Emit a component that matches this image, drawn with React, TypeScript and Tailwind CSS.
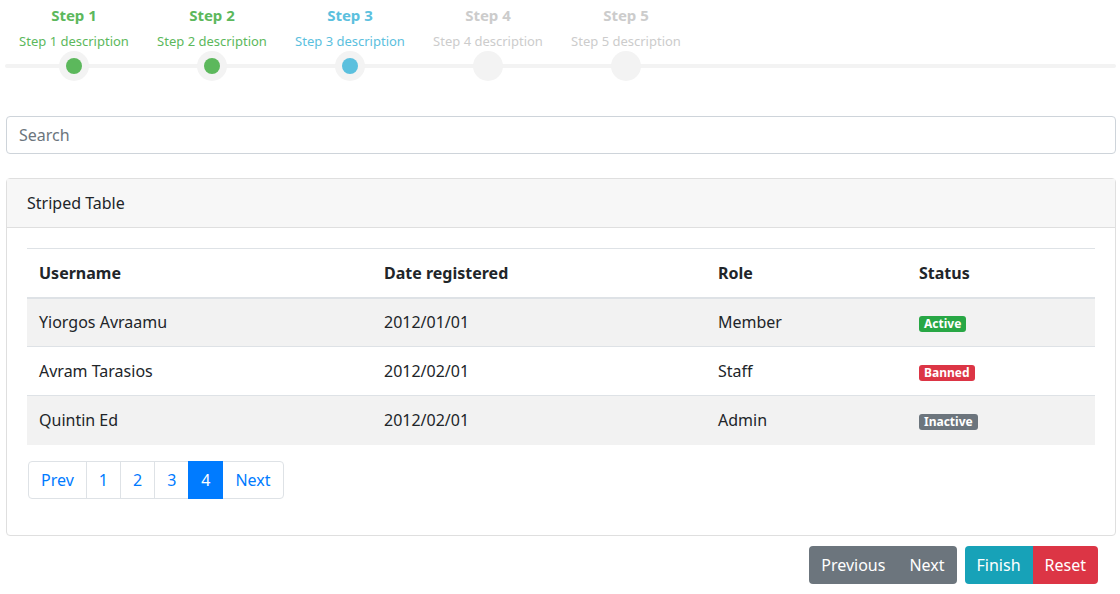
import React, { useState } from "react";

type Step = { title: string; desc: string; state: "done" | "active" | "todo" };

const steps: Step[] = [
  { title: "Step 1", desc: "Step 1 description", state: "done" },
  { title: "Step 2", desc: "Step 2 description", state: "done" },
  { title: "Step 3", desc: "Step 3 description", state: "active" },
  { title: "Step 4", desc: "Step 4 description", state: "todo" },
  { title: "Step 5", desc: "Step 5 description", state: "todo" },
];

const users = [
  { name: "Yiorgos Avraamu", date: "2012/01/01", role: "Member", status: "Active" },
  { name: "Avram Tarasios", date: "2012/02/01", role: "Staff", status: "Banned" },
  { name: "Quintin Ed", date: "2012/02/01", role: "Admin", status: "Inactive" },
];

const badgeColor: Record<string, string> = {
  Active: "bg-[#28a745]",
  Banned: "bg-[#dc3545]",
  Inactive: "bg-[#6c757d]",
};

const textColor = {
  done: "text-[#5cb85c]",
  active: "text-[#5bc0de]",
  todo: "text-[#cccccc]",
};

const dotColor = {
  done: "bg-[#5cb85c]",
  active: "bg-[#5bc0de]",
  todo: "bg-transparent",
};

const App = (): React.JSX.Element => {
  const [search, setSearch] = useState<string>("");
  const [page, setPage] = useState<number>(4);

  return (
    <div className="w-[1120px] h-[594px] bg-white pl-[6px] pr-[4px] font-['Segoe_UI','Noto_Sans',sans-serif] text-[#212529] overflow-hidden">
      {/* stepper */}
      <div className="relative -ml-px">
        <div className="absolute left-0 right-0 top-[64px] h-[4px] rounded-full bg-[#f3f3f3]" />
        <div className="relative flex">
          {steps.map((s) => (
            <div key={s.title} className="w-[138px] flex flex-col items-center">
              <div className={`mt-[4px] text-[15px] leading-[22px] font-bold ${textColor[s.state]}`}>
                {s.title}
              </div>
              <div className={`mt-[6px] text-[13px] leading-[18px] ${textColor[s.state]}`}>
                {s.desc}
              </div>
              <div className="mt-[1px] w-[30px] h-[30px] rounded-full bg-[#f3f3f3] flex items-center justify-center">
                <div className={`w-[16px] h-[16px] rounded-full ${dotColor[s.state]}`} />
              </div>
            </div>
          ))}
        </div>
      </div>

      {/* search */}
      <input
        type="text"
        value={search}
        onChange={(e) => setSearch(e.target.value)}
        placeholder="Search"
        className="mt-[35px] block w-full h-[38px] px-3 text-[16px] border border-[#ced4da] rounded-[4px] outline-none placeholder:text-[#6c757d]"
      />

      {/* card */}
      <div className="mt-[24px] border border-[#dfdfdf] rounded-[4px]">
        <div className="h-[49px] px-5 flex items-center bg-[#f7f7f7] border-b border-[#dfdfdf] text-[16px]">
          Striped Table
        </div>
        <div className="p-5">
          <table className="w-full text-[16px] border-collapse">
            <thead>
              <tr className="border-t border-[#dee2e6] border-b-2">
                <th className="w-[345px] px-3 h-[49px] text-left font-bold">Username</th>
                <th className="w-[334px] px-3 text-left font-bold">Date registered</th>
                <th className="w-[201px] px-3 text-left font-bold">Role</th>
                <th className="px-3 text-left font-bold">Status</th>
              </tr>
            </thead>
            <tbody>
              {users.map((u, i) => (
                <tr
                  key={u.name}
                  className={`border-t border-[#dee2e6] ${i % 2 === 0 ? "bg-[#f2f2f2]" : ""}`}
                >
                  <td className="px-3 h-[49px]">{u.name}</td>
                  <td className="px-3">{u.date}</td>
                  <td className="px-3">{u.role}</td>
                  <td className="px-3">
                    <span
                      className={`inline-block px-[5px] rounded-[3px] text-[12px] leading-[16px] font-bold text-white ${badgeColor[u.status]}`}
                    >
                      {u.status}
                    </span>
                  </td>
                </tr>
              ))}
            </tbody>
          </table>

          <ul className="mt-4 mb-4 ml-px flex text-[16px] text-[#007bff]">
            <li className="h-[38px] px-3 flex items-center border border-[#dee2e6] rounded-l-[4px] cursor-pointer">
              Prev
            </li>
            {[1, 2, 3, 4].map((n) => (
              <li
                key={n}
                onClick={() => setPage(n)}
                className={`h-[38px] px-3 -ml-px flex items-center border cursor-pointer ${
                  page === n
                    ? "bg-[#007bff] border-[#007bff] text-white z-10"
                    : "border-[#dee2e6]"
                }`}
              >
                {n}
              </li>
            ))}
            <li className="h-[38px] px-3 -ml-px flex items-center border border-[#dee2e6] rounded-r-[4px] cursor-pointer">
              Next
            </li>
          </ul>
        </div>
      </div>

      {/* wizard buttons */}
      <div className="mt-[10px] mr-[18px] flex justify-end gap-2 text-[16px] text-white">
        <div className="flex rounded-[4px] overflow-hidden bg-[#6c757d]">
          <button className="h-[38px] px-3">Previous</button>
          <button className="h-[38px] px-3">Next</button>
        </div>
        <div className="flex rounded-[4px] overflow-hidden">
          <button className="h-[38px] px-3 bg-[#17a2b8]">Finish</button>
          <button className="h-[38px] px-3 bg-[#dc3545]">Reset</button>
        </div>
      </div>
    </div>
  );
};

export default App;
